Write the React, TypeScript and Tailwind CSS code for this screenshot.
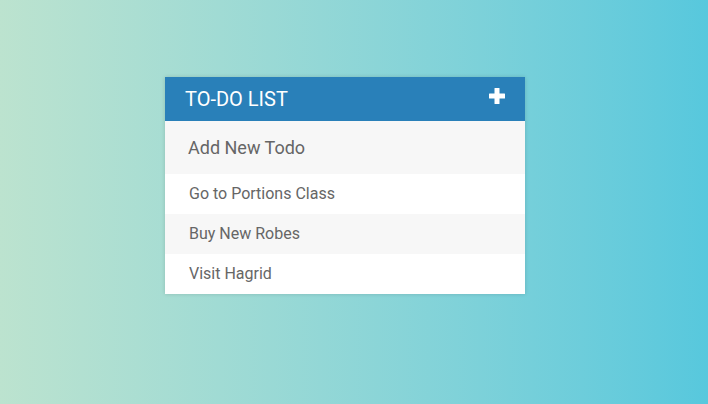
import React from 'react';

const todos = ['Go to Portions Class', 'Buy New Robes', 'Visit Hagrid'];

export default function App() {
  return (
    <div
      className="h-[404px] w-full bg-gradient-to-r from-[#bce3cf] to-[#57c8dd] pt-[77px]"
      style={{ fontFamily: 'Roboto, "Liberation Sans", sans-serif' }}
    >
      <div className="ml-[165px] w-[360px] bg-white shadow-[0_0_4px_rgba(0,0,0,0.15)]">
        {/* Header */}
        <div className="flex h-[44px] items-center justify-between bg-[#2980b9] pl-[20px] pr-[20px]">
          <h1 className="text-[20px] font-normal leading-none text-white">TO-DO LIST</h1>
          <svg width="16" height="16" viewBox="0 0 16 16" className="mt-[-6px]">
            <rect x="5.5" y="0" width="5" height="16" rx="0.5" fill="#fff" />
            <rect x="0" y="5.5" width="16" height="5" rx="0.5" fill="#fff" />
          </svg>
        </div>

        {/* New todo input */}
        <div className="flex h-[53px] items-center bg-[#f7f7f7] pb-[1px] pl-[23px]">
          <span className="text-[18px] text-[#666]">Add New Todo</span>
        </div>

        {/* Todo items */}
        <ul>
          {todos.map((t, i) => (
            <li
              key={t}
              className={`flex h-[40px] items-center pl-[24px] text-[16px] text-[#666] ${
                i % 2 === 1 ? 'bg-[#f7f7f7]' : 'bg-white'
              }`}
            >
              {t}
            </li>
          ))}
        </ul>
      </div>
    </div>
  );
}
